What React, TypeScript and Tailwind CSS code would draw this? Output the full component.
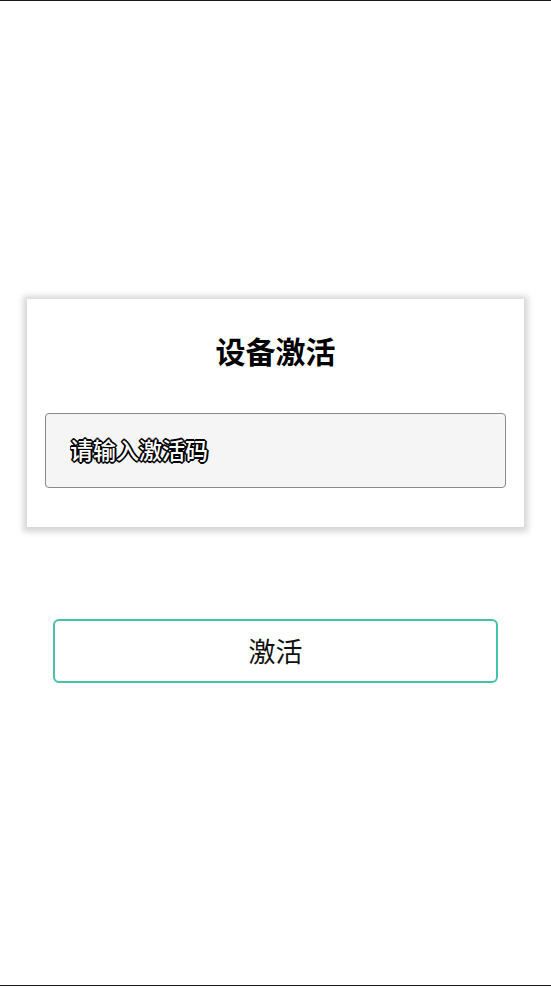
export default function App() {
  return (
    <div
      className="h-[986px] bg-white border-y border-[#1a1a1a] flex flex-col"
      style={{ fontFamily: '"Noto Sans CJK SC", "Noto Sans", sans-serif' }}
    >
      {/* Activation card */}
      <div className="mt-[298px] mx-[27px] bg-white shadow-[0_1px_6px_4px_rgba(0,0,0,0.16)] pt-[31px] pb-[39px] px-[18px]">
        <h1 className="text-center text-[30px] leading-[40px] font-bold text-black">设备激活</h1>
        <input
          className="mt-[43px] w-full h-[75px] rounded-[4px] border border-[#8a8a8a] bg-[#f5f5f5] pl-[24px] pr-4 pb-[3px] text-[23px] font-medium outline-none placeholder:text-white placeholder:[text-shadow:-1px_-1px_0_#000,1px_-1px_0_#000,-1px_1px_0_#000,1px_1px_0_#000,0_-2px_0_#000,0_2px_0_#000,-2px_0_0_#000,2px_0_0_#000]"
          placeholder="请输入激活码"
        />
      </div>

      {/* Submit */}
      <button className="mt-[92px] mx-[53px] h-[64px] rounded-[6px] border-2 border-[#45c2aa] bg-white text-[27px] text-[#111]">
        激活
      </button>
    </div>
  )
}
